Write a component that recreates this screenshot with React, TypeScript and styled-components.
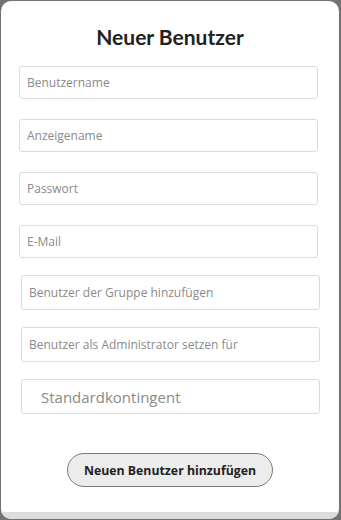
import styled, { createGlobalStyle } from 'styled-components';

const GlobalStyle = createGlobalStyle`
  html, body {
    margin: 0;
    padding: 0;
    background: #727272;
  }
  body {
    font-family: "Open Sans", "Noto Sans", sans-serif;
  }
`;

const Backdrop = styled.div`
  width: 341px;
  height: 520px;
  padding: 1px 2px 1px 1px;
  box-sizing: border-box;
`;

const Modal = styled.div`
  height: 100%;
  background: #fff;
  border-radius: 10px;
  overflow: hidden;
  display: flex;
  flex-direction: column;
`;

const Body = styled.div`
  flex: 1;
  display: flex;
  flex-direction: column;
`;

const Title = styled.h2`
  margin: 24px 0 0;
  text-align: center;
  font-family: Lato, "Open Sans", sans-serif;
  font-weight: 700;
  font-size: 21px;
  line-height: 24px;
  color: #222;
`;

const Fields = styled.div<{ $left: number; $gap: number; $top: number }>`
  display: flex;
  flex-direction: column;
  gap: ${(p) => p.$gap}px;
  margin: ${(p) => p.$top}px 0 0 ${(p) => p.$left}px;
`;

const Input = styled.input<{ $height: number; $pad: number; $size: number }>`
  box-sizing: border-box;
  width: 299px;
  height: ${(p) => p.$height}px;
  padding: 0 0 0 ${(p) => p.$pad}px;
  border: 1px solid #dbdbdb;
  border-radius: 3px;
  font-family: "Open Sans", sans-serif;
  font-size: ${(p) => p.$size}px;
  color: #333;
  outline: none;

  &::placeholder {
    color: #8a8a8a;
  }
`;

const Actions = styled.div`
  display: flex;
  justify-content: center;
  margin-top: 39px;
`;

const Button = styled.button`
  box-sizing: border-box;
  width: 206px;
  height: 34px;
  border: 1px solid #7a7a7a;
  border-radius: 17px;
  background: #ececec;
  font-family: "Open Sans", sans-serif;
  font-weight: 700;
  font-size: 12.3px;
  color: #222;
`;

const Footer = styled.div`
  height: 7px;
  background: #dcdcdc;
`;

const basic = ['Benutzername', 'Anzeigename', 'Passwort', 'E-Mail'];
const extra = ['Benutzer der Gruppe hinzufügen', 'Benutzer als Administrator setzen für'];

export default function App() {
  return (
    <>
      <GlobalStyle />
      <Backdrop>
        <Modal>
          <Body>
            <Title>Neuer Benutzer</Title>
            <Fields $left={18} $gap={20} $top={17}>
              {basic.map((p) => (
                <Input key={p} $height={33} $pad={7} $size={12} placeholder={p} />
              ))}
            </Fields>
            <Fields $left={20} $gap={17} $top={17}>
              {extra.map((p) => (
                <Input key={p} $height={35} $pad={7} $size={12} placeholder={p} />
              ))}
              <Input $height={35} $pad={19} $size={15} placeholder="Standardkontingent" />
            </Fields>
            <Actions>
              <Button>Neuen Benutzer hinzufügen</Button>
            </Actions>
          </Body>
          <Footer />
        </Modal>
      </Backdrop>
    </>
  );
}
